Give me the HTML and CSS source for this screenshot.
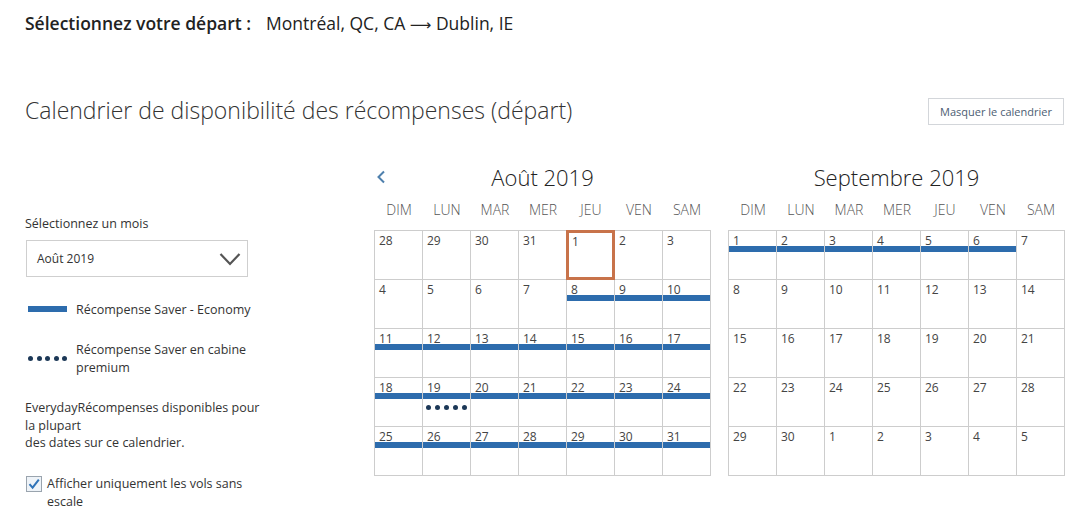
FILE: index.html
```html
<!DOCTYPE html>
<html lang="fr">
<head>
<meta charset="utf-8">
<title>Calendrier</title>
<link rel="stylesheet" href="styles.css">
</head>
<body>
<header class="route">
  <span class="route-label">Sélectionnez votre départ :</span>
  <span class="route-value">Montréal, QC, CA <span class="arrow">⟶</span> Dublin, IE</span>
</header>

<div class="title-row">
  <h1 class="page-title">Calendrier de disponibilité des récompenses (départ)</h1>
  <button class="hide-btn">Masquer le calendrier</button>
</div>

<main class="main">
  <aside class="side">
    <div class="field-label">Sélectionnez un mois</div>
    <div class="select">
      <span>Août 2019</span>
      <svg class="select-chev" width="22" height="14" viewBox="0 0 22 14"><path d="M1.5 2 L11 12 L20.5 2" fill="none" stroke="#555" stroke-width="2.2"/></svg>
    </div>
    <div class="legend">
      <span class="legend-bar"></span>
      <span class="legend-text">Récompense Saver - Economy</span>
    </div>
    <div class="legend legend-premium">
      <span class="legend-dots"><i></i><i></i><i></i><i></i><i></i></span>
      <span class="legend-text">Récompense Saver en cabine<br>premium</span>
    </div>
    <p class="note">EverydayRécompenses disponibles pour<br>la plupart<br>des dates sur ce calendrier.</p>
    <label class="check">
      <svg class="check-box" width="16" height="16" viewBox="0 0 16 16"><rect x="0.5" y="0.5" width="15" height="15" fill="#eef3f8" stroke="#9aa4ae"/><path d="M3.5 8.2 L6.6 11.6 L12.8 3.6" fill="none" stroke="#2f73b8" stroke-width="2"/></svg>
      <span>Afficher uniquement les vols sans<br>escale</span>
    </label>
  </aside>

  <section class="cal">
    <div class="cal-head">
      <svg class="prev" width="10" height="14" viewBox="0 0 10 14"><path d="M8 1.5 L2.5 7 L8 12.5" fill="none" stroke="#4f80ad" stroke-width="2"/></svg>
      <div class="cal-title">Août 2019</div>
      <span></span>
    </div>
    <div class="dow"><span>DIM</span><span>LUN</span><span>MAR</span><span>MER</span><span>JEU</span><span>VEN</span><span>SAM</span></div>
    <div class="grid">
      <div class="cell">28</div><div class="cell">29</div><div class="cell">30</div><div class="cell">31</div><div class="cell today">1</div><div class="cell">2</div><div class="cell">3</div>
      <div class="cell">4</div><div class="cell">5</div><div class="cell">6</div><div class="cell">7</div><div class="cell eco">8</div><div class="cell eco">9</div><div class="cell eco">10</div>
      <div class="cell eco">11</div><div class="cell eco">12</div><div class="cell eco">13</div><div class="cell eco">14</div><div class="cell eco">15</div><div class="cell eco">16</div><div class="cell eco">17</div>
      <div class="cell eco">18</div><div class="cell eco prem">19<span class="dots"><i></i><i></i><i></i><i></i><i></i></span></div><div class="cell eco">20</div><div class="cell eco">21</div><div class="cell eco">22</div><div class="cell eco">23</div><div class="cell eco">24</div>
      <div class="cell eco">25</div><div class="cell eco">26</div><div class="cell eco">27</div><div class="cell eco">28</div><div class="cell eco">29</div><div class="cell eco">30</div><div class="cell eco">31</div>
    </div>
  </section>

  <section class="cal">
    <div class="cal-head">
      <span></span>
      <div class="cal-title">Septembre 2019</div>
      <span></span>
    </div>
    <div class="dow"><span>DIM</span><span>LUN</span><span>MAR</span><span>MER</span><span>JEU</span><span>VEN</span><span>SAM</span></div>
    <div class="grid">
      <div class="cell eco">1</div><div class="cell eco">2</div><div class="cell eco">3</div><div class="cell eco">4</div><div class="cell eco">5</div><div class="cell eco">6</div><div class="cell">7</div>
      <div class="cell">8</div><div class="cell">9</div><div class="cell">10</div><div class="cell">11</div><div class="cell">12</div><div class="cell">13</div><div class="cell">14</div>
      <div class="cell">15</div><div class="cell">16</div><div class="cell">17</div><div class="cell">18</div><div class="cell">19</div><div class="cell">20</div><div class="cell">21</div>
      <div class="cell">22</div><div class="cell">23</div><div class="cell">24</div><div class="cell">25</div><div class="cell">26</div><div class="cell">27</div><div class="cell">28</div>
      <div class="cell">29</div><div class="cell">30</div><div class="cell">1</div><div class="cell">2</div><div class="cell">3</div><div class="cell">4</div><div class="cell">5</div>
    </div>
  </section>
</main>
</body>
</html>
```

FILE: styles.css
```css
* { box-sizing: border-box; }

body {
  margin: 0;
  background: #fff;
  color: #333;
  font-family: "Open Sans", "Noto Sans", sans-serif;
  width: 1084px;
  height: 522px;
  overflow: hidden;
}

.route {
  padding: 11px 0 0 25px;
  height: 35px;
  font-size: 17.5px;
  line-height: 24px;
  color: #222;
  display: flex;
  gap: 15px;
}
.route-label { font-weight: 600; }
.arrow {
  font-family: "DejaVu Sans", sans-serif;
  font-size: 15px;
  line-height: 1;
}

.title-row {
  display: flex;
  justify-content: space-between;
  align-items: center;
  padding: 0 20px 0 25px;
  margin-top: 61px;
  height: 28px;
}
.page-title {
  margin: 0;
  font-size: 23px;
  font-weight: 300;
  line-height: 28px;
  color: #333;
}
.hide-btn {
  height: 27px;
  width: 136px;
  margin-top: 2px;
  background: #fff;
  border: 1px solid #d3d6da;
  font-family: inherit;
  font-size: 11px;
  color: #4c5d72;
  padding: 0;
}

.main {
  display: flex;
  margin-top: 39px;
}

.side {
  width: 374px;
  padding: 51px 0 0 25px;
  font-size: 12.5px;
  color: #333;
}
.field-label {
  line-height: 18px;
  margin-top: 1px;
}
.select {
  margin: 7px 0 0 1px;
  width: 222px;
  height: 37px;
  border: 1px solid #cfcfcf;
  display: flex;
  align-items: center;
  justify-content: space-between;
  padding: 0 6px 0 10px;
  font-size: 12px;
  color: #333;
}
.select-chev { margin-top: 1px; }

.legend {
  display: flex;
  align-items: center;
  gap: 9px;
  margin-top: 24px;
  line-height: 18px;
  padding-left: 3px;
}
.legend-bar {
  width: 39px;
  height: 6px;
  background: #2d6cad;
  margin-top: -2px;
}
.legend-premium { margin-top: 22px; }
.legend-dots {
  display: flex;
  gap: 3.5px;
  width: 39px;
  margin-top: -1px;
}
.legend-dots i, .dots i {
  display: block;
  width: 5px;
  height: 5px;
  border-radius: 50%;
  background: #1c3857;
}

.note {
  margin: 22px 0 0;
  line-height: 17.5px;
}

.check {
  display: flex;
  align-items: flex-start;
  gap: 5px;
  margin-top: 23px;
  line-height: 18px;
  padding-left: 1px;
}
.check-box { margin-top: 1px; flex: none; }

.cal {
  width: 337px;
}
.cal + .cal { margin-left: 17px; }

.cal-head {
  display: grid;
  grid-template-columns: 24px 1fr 24px;
  align-items: center;
  height: 28px;
}
.prev { margin-left: 2px; margin-top: -1px; }
.cal-title {
  text-align: center;
  font-size: 22px;
  font-weight: 300;
  color: #222;
  line-height: 28px;
}

.dow {
  display: grid;
  grid-template-columns: repeat(7, 48px);
  padding-left: 1px;
  margin-top: 5px;
  height: 28px;
  line-height: 28px;
  font-size: 14px;
  color: #555;
  text-align: center;
  font-weight: 300;
}

.grid {
  margin-top: 6px;
  display: grid;
  grid-template-columns: repeat(7, 48px);
  grid-auto-rows: 49px;
  border-top: 1px solid #cdcdcd;
  border-left: 1px solid #cdcdcd;
}
.cell {
  position: relative;
  border-right: 1px solid #cdcdcd;
  border-bottom: 1px solid #cdcdcd;
  padding: 2px 0 0 4px;
  font-size: 12px;
  line-height: 16px;
  color: #444;
}
.cell.eco::after {
  content: "";
  position: absolute;
  left: 0;
  right: 0;
  top: 15px;
  height: 6px;
  background: #2d6cad;
}
.cell.today {
  box-shadow: inset 0 0 0 2px #c8734a;
  border: 1px solid #c8734a;
  margin-left: -1px;
  margin-top: -1px;
  padding: 3px 0 0 5px;
}
.dots {
  position: absolute;
  left: 3px;
  top: 27px;
  display: flex;
  gap: 4px;
}
```
